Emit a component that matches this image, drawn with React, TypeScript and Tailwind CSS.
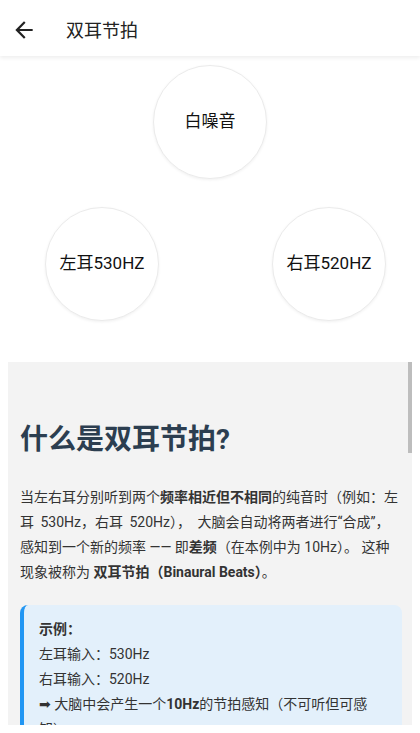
import React from "react";

const font = { fontFamily: '"Roboto", "Noto Sans CJK SC", sans-serif' };

function Circle({ label }: { label: string }) {
  return (
    <div className="w-[114px] h-[114px] rounded-full bg-white border border-[#ebebeb] shadow-[0_1px_3px_rgba(0,0,0,0.06)] flex items-center justify-center text-[17px] text-[#111]">
      {label}
    </div>
  );
}

export default function App() {
  return (
    <div className="w-[420px] h-[733px] overflow-hidden bg-white" style={font}>
      <header className="relative z-10 h-14 flex items-center bg-white shadow-[0_2px_4px_rgba(0,0,0,0.07)]">
        <div className="pl-[11px] pt-[4px] flex items-center">
          <svg width="26" height="26" viewBox="0 0 24 24" fill="#222">
            <path d="M20 11H7.83l5.59-5.59L12 4l-8 8 8 8 1.41-1.41L7.83 13H20v-2z" />
          </svg>
        </div>
        <div className="ml-[29px] pt-[4px] text-[18px] text-[#222]">双耳节拍</div>
      </header>

      <div className="pt-[9px] flex justify-center">
        <Circle label="白噪音" />
      </div>
      <div className="mt-[28px] flex justify-between pl-[45px] pr-[34px]">
        <Circle label="左耳530HZ" />
        <Circle label="右耳520HZ" />
      </div>

      <div className="relative mt-[41px] mx-2 h-[363px] overflow-hidden bg-[#f3f3f3] pl-3 pr-3 pt-[61px]">
        <div className="absolute right-0 top-0 w-[4px] h-[91px] bg-[#bdbdbd]" />
        <h1 className="text-[28px] leading-[34px] font-bold text-[#2c3e50]">什么是双耳节拍?</h1>
        <p className="mt-[28px] text-[14px] leading-[25px] text-[#333]">
          当左右耳分别听到两个<b>频率相近但不相同</b>的纯音时（例如：左<span className="[word-spacing:3px]">耳 530Hz，右耳 520Hz）， 大脑</span>会自动将两者进行“合成”，感知到一个新的频率 —— 即<b>差频</b>（在本例中为 10Hz）。 这种现象被称为 <b>双耳节拍（Binaural Beats）</b>。
        </p>
        <div className="mt-[20px] -mr-[2px] rounded-lg border-l-4 border-[#2196f3] bg-[#e3f0fb] pl-[15px] pr-[15px] pt-3 pb-3 text-[14px] leading-[25px] text-[#333]">
          <div className="font-bold">示例：</div>
          <div>左耳输入：530Hz</div>
          <div>右耳输入：520Hz</div>
          <div>
            <span style={{ fontFamily: '"DejaVu Sans", sans-serif' }}>➡</span> 大脑中会产生一个<b>10Hz</b>的节拍感知（不可听但可感知）
          </div>
        </div>
      </div>
    </div>
  );
}
